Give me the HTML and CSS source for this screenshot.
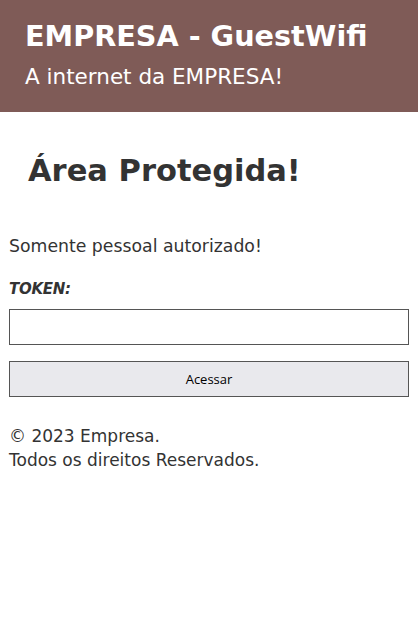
FILE: index.html
```html
<!DOCTYPE html>
<html lang="pt-BR">
<head>
<meta charset="utf-8">
<title>EMPRESA - GuestWifi</title>
<link rel="stylesheet" href="styles.css">
</head>
<body>
<header class="topbar">
  <h1 class="brand">EMPRESA - GuestWifi</h1>
  <p class="tagline">A internet da EMPRESA!</p>
</header>
<main class="content">
  <h2 class="heading">Área Protegida!</h2>
  <p class="notice">Somente pessoal autorizado!</p>
  <form class="login">
    <label class="label" for="token">TOKEN:</label>
    <input class="field" id="token" type="text">
    <button class="submit" type="button">Acessar</button>
  </form>
  <footer class="foot">
    <p>© 2023 Empresa.</p>
    <p>Todos os direitos Reservados.</p>
  </footer>
</main>
</body>
</html>
```
FILE: styles.css
```css
html, body {
  margin: 0;
  padding: 0;
  background: #fff;
}
body {
  font-family: "DejaVu Sans", sans-serif;
  color: #333;
}
.topbar {
  background: #7f5b57;
  height: 112px;
  box-sizing: border-box;
  padding: 16px 25px 0;
  color: #fff;
  white-space: nowrap;
}
.brand {
  margin: 0;
  font-size: 28.7px;
  line-height: 40px;
  font-weight: bold;
}
.tagline {
  margin: 7px 0 0;
  font-size: 21.5px;
  line-height: 28px;
}
.content {
  padding: 0 9px;
}
.heading {
  margin: 39px 0 0 19px;
  font-size: 30.5px;
  line-height: 40px;
  font-weight: bold;
}
.notice {
  margin: 43px 0 0;
  font-size: 17.3px;
  line-height: 24px;
}
.login {
  display: flex;
  flex-direction: column;
}
.label {
  margin-top: 19px;
  font-size: 15px;
  line-height: 24px;
  font-weight: bold;
  font-style: italic;
  letter-spacing: -0.3px;
}
.field {
  margin: 8px 0 0;
  height: 36px;
  box-sizing: border-box;
  border: 1px solid #555;
  border-radius: 0;
  padding: 0 6px;
  background: #fff;
  width: 100%;
}
.submit {
  margin: 16px 0 0;
  height: 36px;
  box-sizing: border-box;
  border: 1px solid #555;
  border-radius: 0;
  background: #e9e9ed;
  color: #000;
  font-family: "Open Sans", sans-serif;
  font-size: 13px;
  width: 100%;
}
.foot {
  margin-top: 27px;
  font-size: 17px;
  line-height: 24px;
}
.foot p {
  margin: 0;
}
```
